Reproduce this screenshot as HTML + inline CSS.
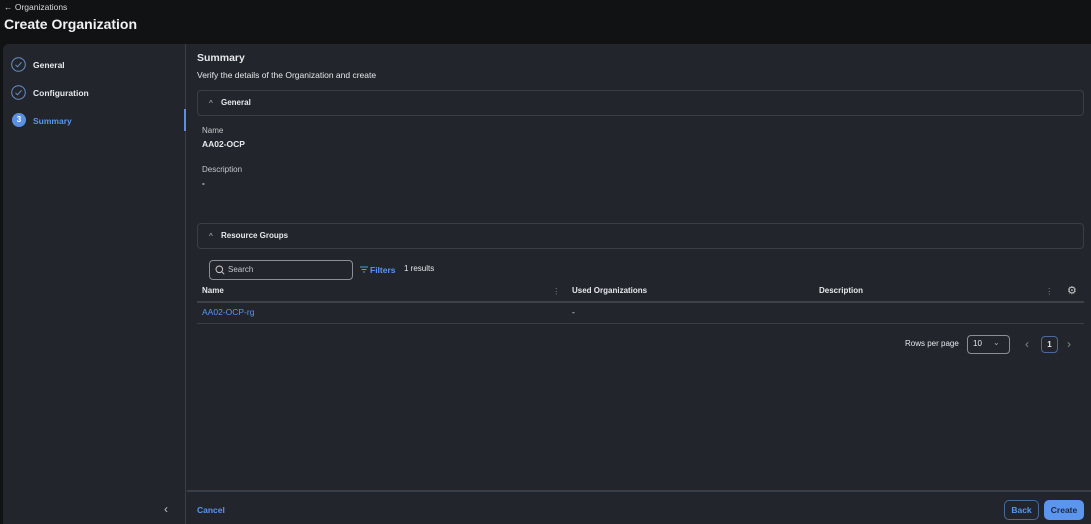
<!DOCTYPE html>
<html><head><style>
*{box-sizing:border-box;margin:0;padding:0}
body{width:1091px;height:524px;background:#111214;font-family:"Liberation Sans",sans-serif;color:#e6e8eb;position:relative;overflow:hidden;font-size:8.5px}
.abs{position:absolute}
.b{font-weight:bold}
.blue{color:#5b95ee}
.panel{left:3px;top:44px;width:1088px;height:480px;background:#22252b;border-radius:6px 0 0 0;}
.side{left:3px;top:44px;width:183px;height:480px;border-right:1px solid #3a3e46;background:#22252b;border-radius:6px 0 0 0}
.box{border:1px solid #3a3e46;border-radius:4px}
.line{height:1px;background:#3a3e46}
</style></head><body>
<div class="abs" style="left:4px;top:2px;font-size:8.5px;color:#d8dadd">← Organizations</div>
<div class="abs b" style="left:4px;top:16px;font-size:14px;color:#f0f1f3">Create Organization</div>
<div class="abs panel"></div>
<div class="abs side"></div>
<svg class="abs" style="left:11px;top:57px" width="15" height="15"><circle cx="7.5" cy="7.5" r="6.8" fill="none" stroke="#6a8fc8" stroke-width="1"/><path d="M4.5 7.8l2 2 4-4.5" fill="none" stroke="#6a8fc8" stroke-width="1"/></svg>
<div class="abs b" style="left:33px;top:60px">General</div>
<svg class="abs" style="left:11px;top:85px" width="15" height="15"><circle cx="7.5" cy="7.5" r="6.8" fill="none" stroke="#6a8fc8" stroke-width="1"/><path d="M4.5 7.8l2 2 4-4.5" fill="none" stroke="#6a8fc8" stroke-width="1"/></svg>
<div class="abs b" style="left:33px;top:88px">Configuration</div>
<div class="abs b" style="left:12px;top:113px;width:14px;height:14px;border-radius:50%;background:#5b8fe0;color:#fff;font-size:8px;text-align:center;line-height:14px">3</div>
<div class="abs b blue" style="left:33px;top:116px">Summary</div>
<div class="abs" style="left:184px;top:109px;width:2px;height:22px;background:#5b8fe0"></div>
<div class="abs" style="left:164px;top:502px;color:#c0c4ca;font-size:12px">‹</div>

<div class="abs b" style="left:197px;top:52px;font-size:10.5px">Summary</div>
<div class="abs" style="left:197px;top:70px">Verify the details of the Organization and create</div>
<div class="abs box" style="left:197px;top:90px;width:887px;height:26px"></div>
<div class="abs" style="left:209px;top:99px;font-size:8px;color:#bbb">^</div>
<div class="abs b" style="left:221px;top:98px;font-size:8px">General</div>
<div class="abs" style="left:202px;top:126px;color:#c5c8cd;font-size:8px">Name</div>
<div class="abs b" style="left:202px;top:139px">AA02-OCP</div>
<div class="abs" style="left:202px;top:165px;color:#c5c8cd;font-size:8px">Description</div>
<div class="abs b" style="left:202px;top:178px">-</div>
<div class="abs box" style="left:197px;top:223px;width:887px;height:26px"></div>
<div class="abs" style="left:209px;top:232px;font-size:8px;color:#bbb">^</div>
<div class="abs b" style="left:221px;top:231px;font-size:8px">Resource Groups</div>
<div class="abs box" style="left:209px;top:260px;width:144px;height:20px;border-color:#8a8e96"></div>
<svg class="abs" style="left:215px;top:265px" width="10" height="10"><circle cx="4.3" cy="4.3" r="3.3" fill="none" stroke="#ccc" stroke-width="1"/><path d="M6.7 6.7l2.5 2.5" stroke="#ccc" stroke-width="1"/></svg>
<div class="abs" style="left:228px;top:265px;color:#c5c8cd;font-size:8px">Search</div>
<svg class="abs" style="left:360px;top:266px" width="8" height="7"><path d="M0 1h8M1.5 3.5h5M3 6h2" stroke="#5b95ee" stroke-width="1"/></svg>
<div class="abs b blue" style="left:370px;top:265px;font-size:8.5px">Filters</div>
<div class="abs" style="left:404px;top:264px;font-size:8px">1 results</div>
<div class="abs b" style="left:202px;top:286px;font-size:8px">Name</div>
<div class="abs" style="left:552px;top:286px;color:#888">⋮</div>
<div class="abs b" style="left:572px;top:286px;font-size:8px">Used Organizations</div>
<div class="abs b" style="left:819px;top:286px;font-size:8px">Description</div>
<div class="abs" style="left:1045px;top:286px;color:#888">⋮</div>
<div class="abs" style="left:1067px;top:284px;color:#ccc;font-size:11px">⚙</div>
<div class="abs" style="left:197px;top:301px;width:887px;height:2px;background:#3d4149"></div>
<div class="abs blue" style="left:202px;top:307px">AA02-OCP-rg</div>
<div class="abs" style="left:572px;top:307px">-</div>
<div class="abs line" style="left:197px;top:323px;width:887px"></div>
<div class="abs" style="left:905px;top:339px;font-size:8px">Rows per page</div>
<div class="abs box" style="left:967px;top:335px;width:43px;height:19px;border-color:#8a8e96"></div>
<div class="abs" style="left:973px;top:339px;font-size:8px">10</div>
<div class="abs" style="left:993px;top:338px;font-size:8px;color:#aaa">⌄</div>
<div class="abs" style="left:1025px;top:337px;color:#888;font-size:12px">‹</div>
<div class="abs box" style="left:1041px;top:336px;width:17px;height:17px;border-color:#4a6a9a;text-align:center;line-height:15px;font-size:8px;font-weight:bold">1</div>
<div class="abs" style="left:1067px;top:337px;color:#888;font-size:12px">›</div>
<div class="abs line" style="left:187px;top:490px;width:904px;height:2px"></div>
<div class="abs b blue" style="left:197px;top:505px">Cancel</div>
<div class="abs box b blue" style="left:1004px;top:500px;width:35px;height:20px;border-color:#4a6a9a;text-align:center;line-height:18px;border-radius:5px">Back</div>
<div class="abs b" style="left:1044px;top:500px;width:40px;height:20px;background:#5b95ee;border-radius:5px;text-align:center;line-height:20px;color:#1c2a44">Create</div>
</body></html>
